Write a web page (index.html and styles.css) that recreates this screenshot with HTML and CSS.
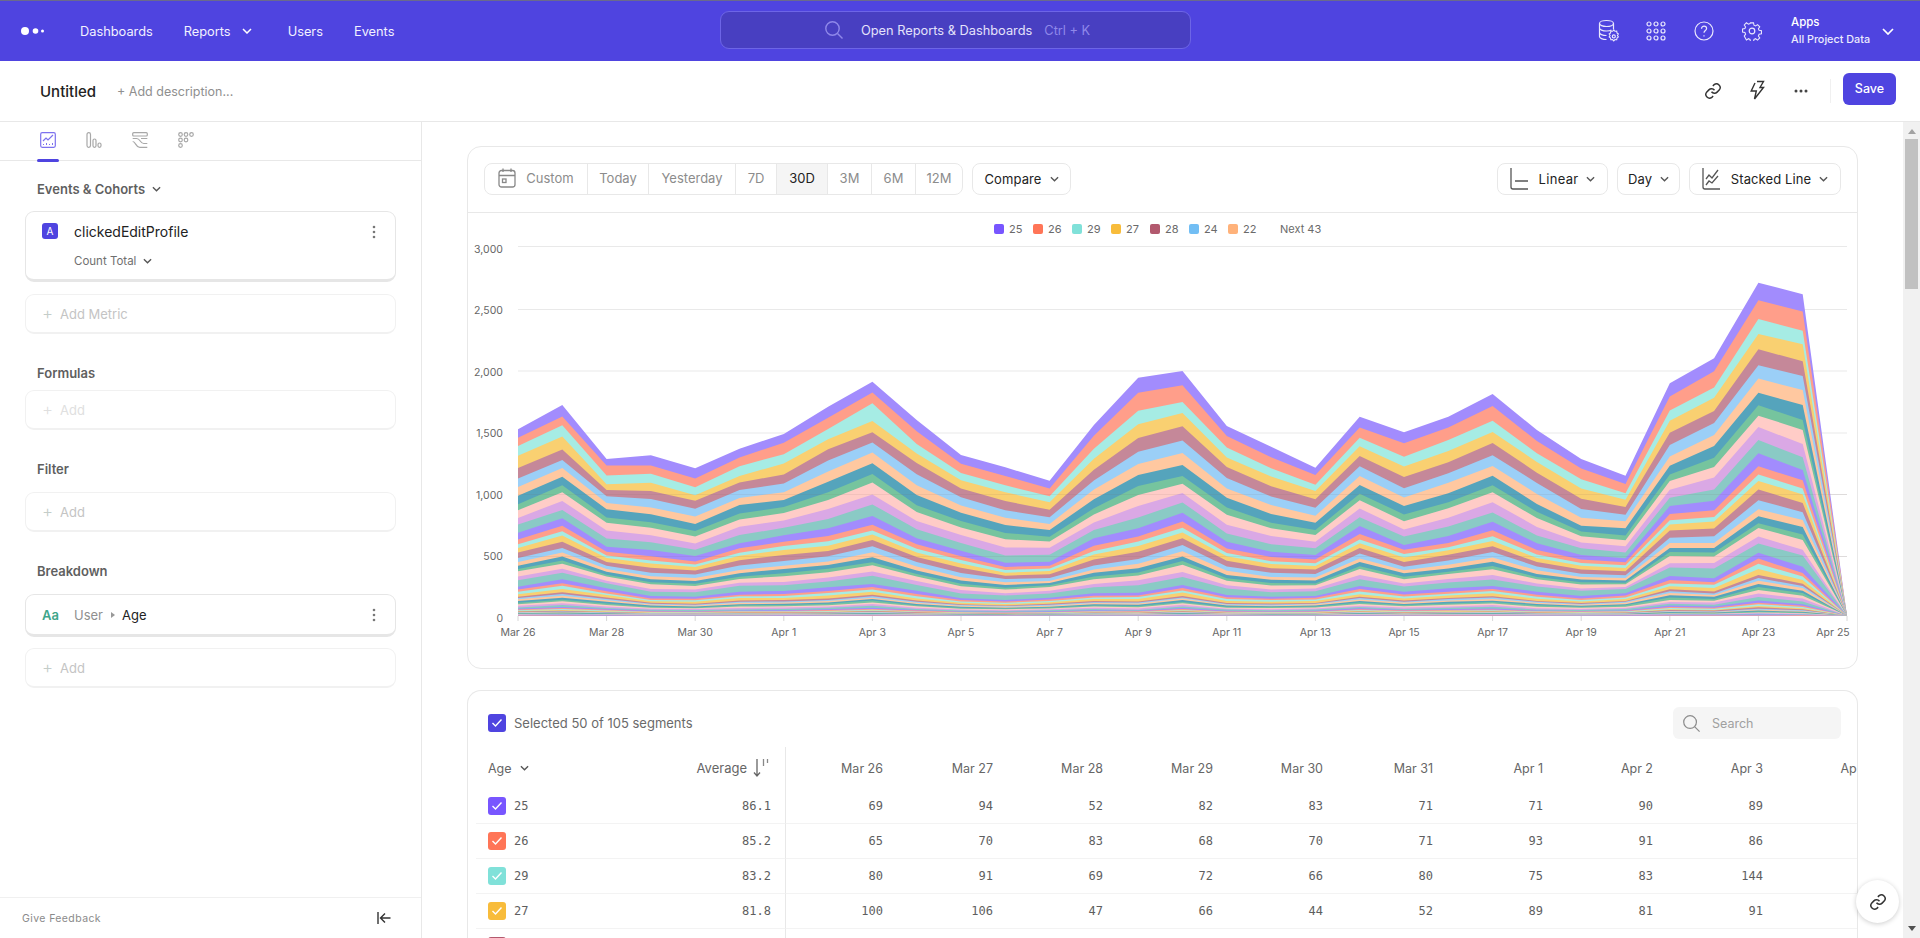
FILE: index.html
```html
<!DOCTYPE html>
<html lang="en">
<head>
<meta charset="utf-8">
<title>Untitled</title>
<link rel="stylesheet" href="styles.css">
</head>
<body>
<header class="topbar">
  <div class="top-left">
    <svg class="logo" width="24" height="10" viewBox="0 0 24 10"><circle cx="4" cy="5" r="4"/><circle cx="14.5" cy="5" r="2.8"/><circle cx="21.5" cy="5" r="1.5"/></svg>
    <nav class="nav">
      <a class="nav-item nav-dash">Dashboards</a>
      <a class="nav-item nav-rep">Reports <svg class="chev" width="10" height="6" viewBox="0 0 10 6"><path d="M1 1l4 4 4-4"/></svg></a>
      <a class="nav-item nav-users">Users</a>
      <a class="nav-item">Events</a>
    </nav>
  </div>
  <div class="omni">
    <svg class="omni-icon" width="20" height="20" viewBox="0 0 20 20"><circle cx="8.5" cy="8.5" r="6.7"/><path d="M13.5 13.5l5 5"/></svg>
    <span class="omni-text">Open Reports &amp; Dashboards</span>
    <span class="omni-key">Ctrl + K</span>
  </div>
  <div class="top-right">
    <svg class="ticon ticon-db" width="22" height="24" viewBox="0 0 22 24"><ellipse cx="8.5" cy="4.5" rx="7" ry="3"/><path d="M1.5 4.5v13c0 1.6 3 3 7 3M1.5 9c0 1.6 3 3 7 3 2 0 4-.4 5-1M15.500 4.500v6M1.500 13.500c0 1.600 3 3 7 3"/><path d="M15.500 12.500l1.300 1.400 1.900-.2.300 1.900 1.500 1.200-1 1.600 1 1.600-1.500 1.200-.3 1.900-1.900-.2-1.300 1.400-1.300-1.400-1.900.2-.3-1.900-1.500-1.200 1-1.600-1-1.600 1.500-1.200.3-1.900 1.900.2z" transform="translate(1.500 -.500) scale(.92)"/><circle cx="15.800" cy="17.400" r="1.500"/></svg>
    <svg class="ticon ticon-grid" width="20" height="20" viewBox="0 0 20 20"><circle cx="3" cy="3" r="2"/><circle cx="10" cy="3" r="2"/><circle cx="17" cy="3" r="2"/><circle cx="3" cy="10" r="2"/><circle cx="10" cy="10" r="2"/><circle cx="17" cy="10" r="2"/><circle cx="3" cy="17" r="2"/><circle cx="10" cy="17" r="2"/><circle cx="17" cy="17" r="2"/></svg>
    <svg class="ticon ticon-help" width="20" height="20" viewBox="0 0 20 20"><circle cx="10" cy="10" r="9"/><path d="M7.500 7.700c0-1.500 1.100-2.500 2.600-2.500s2.500 1 2.500 2.300c0 1.900-2.600 2-2.600 4.200"/><path d="M10 14.200v1.300"/></svg>
    <svg class="ticon ticon-gear" width="20" height="20" viewBox="0 0 20 20"><path d="M8.300 1h3.400l.5 2.600 1.800.8 2.200-1.500 2.400 2.400-1.500 2.200.8 1.800 2.600.5v3.400l-2.600.5-.8 1.800 1.500 2.200-2.400 2.400-2.200-1.500-1.800.8-.5 2.600H8.300l-.5-2.600-1.800-.8-2.200 1.500L1.400 15.700l1.500-2.200-.8-1.800L-.5 11.200V7.800l2.600-.5.8-1.800L1.400 3.300l2.400-2.400L6 2.400l1.800-.8z" transform="translate(1 1) scale(.9)"/><circle cx="10" cy="10" r="2.800"/></svg>
    <div class="apps">
      <div class="apps-t">Apps</div>
      <div class="apps-s">All Project Data</div>
    </div>
    <svg class="chev chev-apps" width="12" height="7" viewBox="0 0 12 7"><path d="M1 1l5 5 5-5"/></svg>
  </div>
</header>

<div class="titlebar">
  <div class="title">Untitled</div>
  <div class="desc">+ Add description...</div>
  <div class="title-actions">
    <svg class="act" width="18" height="18" viewBox="0 0 24 24"><path d="M10 13a5 5 0 0 0 7.500.5l3-3a5 5 0 0 0-7-7l-1.700 1.700"/><path d="M14 11a5 5 0 0 0-7.500-.5l-3 3a5 5 0 0 0 7 7l1.700-1.700"/></svg>
    <svg class="act act-bolt" width="16" height="20" viewBox="0 0 16 20"><path d="M8 1.500h6.500L11 7.500h3.500L5.500 19l1.800-8H2.200L6 3"/></svg>
    <svg class="act-dots" width="14" height="4" viewBox="0 0 14 4"><circle cx="2" cy="2" r="1.500"/><circle cx="7" cy="2" r="1.500"/><circle cx="12" cy="2" r="1.500"/></svg>
    <span class="act-div"></span>
    <button class="save">Save</button>
  </div>
</div>

<div class="work">
  <aside class="side">
    <div class="tabs">
      <span class="tab tab-on">
        <svg width="16" height="16" viewBox="0 0 16 16"><rect x=".7" y=".7" width="14.600" height="14.600" rx="1.500"/><path d="M3 9l3-3 2 2 5-5"/><path class="tk" d="M3.500 13v-1M6.500 13v-2M9.500 13v-1M12.500 13v-2"/></svg>
      </span>
      <span class="tab">
        <svg width="16" height="16" viewBox="0 0 16 16"><rect x="1" y=".7" width="3.500" height="14.600" rx="1.700"/><rect x="7" y="7" width="3" height="8.300" rx="1.500"/><rect x="12" y="11" width="3" height="4.300" rx="1.500"/></svg>
      </span>
      <span class="tab">
        <svg width="16" height="16" viewBox="0 0 16 16"><rect x=".7" y=".7" width="14.600" height="3.300" rx="1"/><path d="M.7 6.500h4c3.500 0 3.500 5 7 5h3.600M.7 9.500c3 0 3 5.800 7 5.800h7.600M9 6.500h6.300"/></svg>
      </span>
      <span class="tab">
        <svg width="16" height="16" viewBox="0 0 16 16"><circle cx="2.500" cy="2.500" r="1.800"/><circle cx="8" cy="2.500" r="1.800"/><circle cx="13.500" cy="2.500" r="1.800"/><circle cx="2.500" cy="8" r="1.800"/><circle cx="8" cy="8" r="1.800"/><circle cx="2.500" cy="13.500" r="1.800"/></svg>
      </span>
    </div>
    <div class="panel">
      <div class="sec sec-first">Events &amp; Cohorts <svg class="chev chev-dark" width="9" height="6" viewBox="0 0 10 6"><path d="M1 1l4 4 4-4"/></svg></div>
      <div class="card-ev">
        <div class="ev-row">
          <span class="badge">A</span>
          <span class="ev-name">clickedEditProfile</span>
          <svg class="kebab" width="4" height="14" viewBox="0 0 4 14"><circle cx="2" cy="2" r="1.300"/><circle cx="2" cy="7" r="1.300"/><circle cx="2" cy="12" r="1.300"/></svg>
        </div>
        <div class="ev-sub">Count Total <svg class="chev chev-dark" width="9" height="6" viewBox="0 0 10 6"><path d="M1 1l4 4 4-4"/></svg></div>
      </div>
      <div class="add add-metric"><span class="plus">+</span>Add Metric</div>
      <div class="sec">Formulas</div>
      <div class="add add-tight add-faint"><span class="plus">+</span>Add</div>
      <div class="sec">Filter</div>
      <div class="add"><span class="plus">+</span>Add</div>
      <div class="sec">Breakdown</div>
      <div class="card-br">
        <span class="aa">Aa</span>
        <span class="br-user">User</span>
        <span class="br-arrow"></span>
        <span class="br-age">Age</span>
        <svg class="kebab" width="4" height="14" viewBox="0 0 4 14"><circle cx="2" cy="2" r="1.300"/><circle cx="2" cy="7" r="1.300"/><circle cx="2" cy="12" r="1.300"/></svg>
      </div>
      <div class="add add-last"><span class="plus">+</span>Add</div>
    </div>
    <div class="side-foot">
      <span class="feedback">Give Feedback</span>
      <svg class="collapse" width="14" height="12" viewBox="0 0 14 12"><path d="M1 0v12M13.500 6H4M8 1.500L3.500 6 8 10.500"/></svg>
    </div>
  </aside>

  <main class="main">
    <section class="chart-card">
      <div class="toolbar">
        <div class="seg">
          <span class="seg-i seg-custom">
            <svg width="18" height="20" viewBox="0 0 18 20"><rect x="1" y="2.500" width="16" height="16.500" rx="2.500"/><path d="M1 7.500h16M5 .5v3.500M13 .5v3.500"/><rect x="4.500" y="11" width="3.500" height="3.500"/></svg>
            Custom
          </span>
          <span class="seg-i seg-today">Today</span>
          <span class="seg-i seg-yest">Yesterday</span>
          <span class="seg-i seg-7d">7D</span>
          <span class="seg-i seg-30d">30D</span>
          <span class="seg-i seg-3m">3M</span>
          <span class="seg-i seg-6m">6M</span>
          <span class="seg-i seg-12m">12M</span>
        </div>
        <button class="drop drop-compare">Compare <svg class="chev chev-dark" width="9" height="6" viewBox="0 0 10 6"><path d="M1 1l4 4 4-4"/></svg></button>
        <div class="tool-right">
          <button class="drop drop-linear">
            <svg class="ico-ax" width="18" height="22" viewBox="0 0 18 22"><path d="M1 0v19c0 1.500.5 2 2 2h15M5 13h13"/></svg>
            Linear <svg class="chev chev-dark" width="9" height="6" viewBox="0 0 10 6"><path d="M1 1l4 4 4-4"/></svg>
          </button>
          <button class="drop drop-day">Day <svg class="chev chev-dark" width="9" height="6" viewBox="0 0 10 6"><path d="M1 1l4 4 4-4"/></svg></button>
          <button class="drop drop-stack">
            <svg class="ico-ax" width="18" height="22" viewBox="0 0 18 22"><path d="M1 0v19c0 1.500.5 2 2 2h15"/><path d="M4 11l3-4 3 3 6-8M4 17l3-4 3 2 6-7"/></svg>
            Stacked Line <svg class="chev chev-dark" width="9" height="6" viewBox="0 0 10 6"><path d="M1 1l4 4 4-4"/></svg>
          </button>
        </div>
      </div>
      <div class="legend">
        <span class="lg"><i class="sw c25"></i>25</span>
        <span class="lg"><i class="sw c26"></i>26</span>
        <span class="lg"><i class="sw c29"></i>29</span>
        <span class="lg"><i class="sw c27"></i>27</span>
        <span class="lg"><i class="sw c28"></i>28</span>
        <span class="lg"><i class="sw c24"></i>24</span>
        <span class="lg"><i class="sw c22"></i>22</span>
        <span class="lg lg-next">Next 43</span>
      </div>
      <svg id="chart" class="chart" width="1389" height="430" viewBox="468 238 1389 430"></svg>
    </section>

    <section class="table-card">
      <div class="table-top">
        <span class="check c-main"><svg width="12" height="10" viewBox="0 0 12 10"><path d="M1.500 5l3 3 6-6.500"/></svg></span>
        <span class="sel-text">Selected 50 of 105 segments</span>
        <div class="tsearch">
          <svg width="19" height="19" viewBox="0 0 20 20"><circle cx="8.500" cy="8.500" r="6.700"/><path d="M13.500 13.500l5 5"/></svg>
          <span>Search</span>
        </div>
      </div>
      <div class="grid grid-head">
        <div class="g-name g-age">Age <svg class="chev chev-dark" width="9" height="6" viewBox="0 0 10 6"><path d="M1 1l4 4 4-4"/></svg></div>
        <div class="g-avg">Average
          <svg class="sort" width="16" height="20" viewBox="0 0 16 20"><path d="M4 1v17M1 14.500L4 18l3-3.500"/><path class="sort-b" d="M10.500 1v7M14.500 1v4"/></svg>
        </div>
        <div>Mar 26</div><div>Mar 27</div><div>Mar 28</div><div>Mar 29</div><div>Mar 30</div><div>Mar 31</div><div>Apr 1</div><div>Apr 2</div><div>Apr 3</div><div>Apr 4</div>
      </div>
      <div class="grid grid-row">
        <div class="g-name"><span class="check c25"><svg width="12" height="10" viewBox="0 0 12 10"><path d="M1.500 5l3 3 6-6.500"/></svg></span>25</div>
        <div class="g-avg">86.1</div>
        <div>69</div><div>94</div><div>52</div><div>82</div><div>83</div><div>71</div><div>71</div><div>90</div><div>89</div><div></div>
      </div>
      <div class="grid grid-row">
        <div class="g-name"><span class="check c26"><svg width="12" height="10" viewBox="0 0 12 10"><path d="M1.500 5l3 3 6-6.500"/></svg></span>26</div>
        <div class="g-avg">85.2</div>
        <div>65</div><div>70</div><div>83</div><div>68</div><div>70</div><div>71</div><div>93</div><div>91</div><div>86</div><div></div>
      </div>
      <div class="grid grid-row">
        <div class="g-name"><span class="check c29"><svg width="12" height="10" viewBox="0 0 12 10"><path d="M1.500 5l3 3 6-6.500"/></svg></span>29</div>
        <div class="g-avg">83.2</div>
        <div>80</div><div>91</div><div>69</div><div>72</div><div>66</div><div>80</div><div>75</div><div>83</div><div>144</div><div></div>
      </div>
      <div class="grid grid-row">
        <div class="g-name"><span class="check c27"><svg width="12" height="10" viewBox="0 0 12 10"><path d="M1.500 5l3 3 6-6.500"/></svg></span>27</div>
        <div class="g-avg">81.8</div>
        <div>100</div><div>106</div><div>47</div><div>66</div><div>44</div><div>52</div><div>89</div><div>81</div><div>91</div><div></div>
      </div>
      <div class="grid grid-row">
        <div class="g-name"><span class="check c28"><svg width="12" height="10" viewBox="0 0 12 10"><path d="M1.500 5l3 3 6-6.500"/></svg></span></div>
        <div class="g-avg"></div>
        <div></div><div></div><div></div><div></div><div></div><div></div><div></div><div></div><div></div><div></div>
      </div>
    </section>
  </main>

  <div class="scrollbar">
    <span class="sb-up"></span>
    <span class="sb-thumb"></span>
    <span class="sb-down"></span>
  </div>
</div>

<button class="float-link" aria-label="Copy link">
  <svg width="18" height="18" viewBox="0 0 24 24"><path d="M10 13a5 5 0 0 0 7.500.5l3-3a5 5 0 0 0-7-7l-1.700 1.700"/><path d="M14 11a5 5 0 0 0-7.500-.5l-3 3a5 5 0 0 0 7 7l1.700-1.700"/></svg>
</button>
<script src="chart.js"></script>
</body>
</html>
```

FILE: styles.css
```css
* { box-sizing: border-box; }
html, body { margin: 0; padding: 0; height: 938px; overflow: hidden; }
body { font-family: Inter, "Liberation Sans", sans-serif; font-size: 13px; color: #333; background: #fff; display: flex; flex-direction: column; }
button { font-family: inherit; }
svg { display: block; flex: none; }

.chev { fill: none; stroke: #fff; stroke-width: 1.5; display: inline-block; }
.chev-dark { stroke: #555; }

/* top bar */
.topbar { height: 61px; flex: none; background: #4f44e0; border-top: 1px solid #6a6a8c; display: flex; align-items: center; color: #fff; }
.top-left { width: 720px; flex: none; display: flex; align-items: center; padding-left: 21px; }
.logo { fill: #fff; margin-right: 35px; }
.nav { display: flex; align-items: center; font-size: 12.800px; font-weight: 400; }
.nav-item { color: #f2f1ff; display: flex; align-items: center; white-space: nowrap; }
.nav-item .chev { margin-left: 11px; }
.nav-dash { margin-right: 31px; }
.nav-rep { margin-right: 36px; }
.nav-users { margin-right: 31px; }
.omni { width: 471px; height: 38px; flex: none; background: #483fc1; border: 1px solid #6d65e6; border-radius: 9px; display: flex; align-items: center; padding-left: 103px; margin-top: -2px; font-size: 12.800px; }
.omni-icon { fill: none; stroke: #8f88ea; stroke-width: 1.4; margin-right: 17px; }
.omni-text { color: #e4e2fb; margin-right: 12px; white-space: nowrap; }
.omni-key { color: #8f88ea; white-space: nowrap; }
.top-right { flex: 1; display: flex; align-items: center; padding-left: 407px; }
.ticon { fill: none; stroke: #e9e7fd; stroke-width: 1.2; }
.ticon-db { margin-right: 26px; }
.ticon-grid { margin-right: 28px; }
.ticon-help { margin-right: 28px; }
.ticon-gear { margin-right: 29px; }
.apps { width: 91px; font-size: 11.500px; line-height: 17px; font-weight: 500; flex: none; }
.apps-s { font-size: 10.800px; font-weight: 500; color: #ecebfd; }
.chev-apps { stroke-width: 1.7; }

/* title row */
.titlebar { height: 61px; flex: none; border-bottom: 1px solid #e8e8e8; display: flex; align-items: center; padding: 0 24px 0 40px; }
.title { font-size: 15px; font-weight: 500; color: #222; margin-right: 21px; }
.desc { color: #8f8f8f; font-size: 12.500px; }
.title-actions { margin-left: auto; display: flex; align-items: center; }
.act { fill: none; stroke: #333; stroke-width: 1.900; }
.act-bolt { stroke-width: 1.400; margin-left: 27px; margin-top: -3px; }
.act-dots { fill: #444; margin-left: 29px; }
.act-div { width: 1px; height: 24px; background: #f0f0f0; margin: 0 12px 0 22px; }
.save { width: 53px; height: 32px; background: #4f44e0; color: #fff; border: 0; border-radius: 6px; font-size: 12.500px; font-weight: 500; padding: 0 0 2px; margin-top: -4px; }

/* workspace */
.work { flex: 1; min-height: 0; display: flex; }

.side { width: 422px; flex: none; border-right: 1px solid #e8e8e8; display: flex; flex-direction: column; }
.tabs { height: 39px; flex: none; border-bottom: 1px solid #e8e8e8; display: flex; padding-left: 37px; gap: 24px; }
.tab { width: 22px; height: 39px; padding: 10px 3px 0; position: relative; }
.tab svg { fill: none; stroke: #a8a8a8; stroke-width: 1.200; }
.tab-on svg { stroke: #7d72ee; }
.tab-on .tk { stroke-width: 1; }
.tab-on::after { content: ""; position: absolute; left: 0; right: 0; bottom: -1px; height: 3px; background: #4f44e0; border-radius: 2px; }

.panel { flex: 1; padding: 0 25px; }
.sec { height: 20px; line-height: 20px; margin: 29px 0 7px 12px; font-size: 13px; font-weight: 600; color: #5f5f5f; display: flex; align-items: center; }
.sec .chev { margin-left: 7px; }
.sec-first { margin-top: 18px; margin-bottom: 12px; }
.card-ev { height: 71px; border: 1px solid #e6e6e6; border-bottom-width: 3px; border-radius: 9px; padding: 8px 16px 0; }
.ev-row { display: flex; align-items: center; height: 22px; }
.badge { width: 16px; height: 16px; border-radius: 3px; background: #4f44e0; color: #fff; font-size: 10px; display: flex; align-items: center; justify-content: center; margin-right: 16px; }
.ev-name { font-size: 14px; color: #222; }
.kebab { fill: #777; margin-left: auto; margin-right: 3px; }
.ev-row .kebab { margin-top: 1px; }
.ev-sub { margin: 12px 0 0 32px; font-size: 11.500px; color: #6f6f6f; display: flex; align-items: center; gap: 7px; }
.add { height: 40px; margin-bottom: 0; border: 1px solid #f1f1f1; border-bottom-width: 2px; border-radius: 9px; display: flex; align-items: center; padding-left: 16px; font-size: 13px; color: #c4c4c4; }
.add-metric { margin-top: 12px; }
.add-faint { color: #e0e0e0; }
.plus { width: 18px; font-size: 17px; line-height: 1; font-weight: 300; color: #c4cdc9; }
.add-faint .plus { color: #dfdfdf; }
.sec + .add:not(.add-tight), .sec + .card-br { margin-top: 13px; }
.card-br { height: 43px; border: 1px solid #e6e6e6; border-bottom-width: 3px; border-radius: 9px; padding: 0 16px; display: flex; align-items: center; font-size: 13px; }
.aa { width: 32px; color: #3fa68a; font-weight: 600; }
.br-user { color: #8f8f8f; }
.br-arrow { width: 0; height: 0; border-left: 4px solid #999; border-top: 3px solid transparent; border-bottom: 3px solid transparent; margin: 0 7px 0 8px; }
.br-age { color: #222; }
.add-last { margin-top: 11px; }
.side-foot { height: 41px; flex: none; border-top: 1px solid #f0f0f0; display: flex; align-items: center; padding: 0 30px 0 22px; }
.feedback { font-size: 10.500px; letter-spacing: .4px; color: #8a8a8a; }
.collapse { margin-left: auto; fill: none; stroke: #333; stroke-width: 1.400; }

.main { flex: 1; min-width: 0; padding: 24px 45px 0; overflow: hidden; }
.chart-card { height: 523px; border: 1px solid #e8e8e8; border-radius: 14px; overflow: hidden; }
.toolbar { height: 66px; border-bottom: 1px solid #e8e8e8; display: flex; align-items: center; padding: 0 16px 2px 16px; }
.seg { height: 32px; display: flex; border: 1px solid #e8e8e8; border-radius: 8px; overflow: hidden; color: #8c8c8c; flex: none; }
.seg-i { display: flex; align-items: center; justify-content: center; border-right: 1px solid #e8e8e8; white-space: nowrap; flex: none; padding-bottom: 1px; }
.seg-i:last-child { border-right: 0; }
.seg-custom { width: 103px; gap: 10px; }
.seg-custom svg { fill: none; stroke: #888; stroke-width: 1.300; }
.seg-today { width: 61px; }
.seg-yest { width: 87px; }
.seg-7d { width: 41px; }
.seg-30d { width: 51px; background: #f5f5f5; color: #222; }
.seg-3m { width: 44px; }
.seg-6m { width: 44px; }
.seg-12m { width: 46px; }
.drop { height: 32px; background: #fff; border: 1px solid #e8e8e8; border-radius: 8px; display: flex; align-items: center; justify-content: center; gap: 8px; font-size: 13px; color: #222; padding: 0; white-space: nowrap; letter-spacing: .1px; }
.drop-compare { width: 99px; margin-left: 9px; }
.tool-right { margin-left: auto; display: flex; gap: 9px; }
.drop-linear { width: 111px; gap: 8px; letter-spacing: .3px; }
.drop-day { width: 63px; }
.drop-stack { width: 152px; gap: 8px; }
.ico-ax { fill: none; stroke: #555; stroke-width: 1.300; margin-right: 3px; }
.legend { height: 25px; display: flex; align-items: center; padding: 6px 0 0 526px; font-size: 11px; color: #6a6a6a; }
.lg { display: flex; align-items: center; width: 39px; flex: none; }
.lg-next { margin-left: 13px; width: auto; }
.sw { width: 10px; height: 10px; border-radius: 2px; margin-right: 5px; }
.c25 { background: #7856ff; }
.c26 { background: #ff7557; }
.c29 { background: #80e1d9; }
.c27 { background: #f8bc3b; }
.c28 { background: #b2596e; }
.c24 { background: #72bef4; }
.c22 { background: #ffb27a; }
.chart { font-family: Inter, "Liberation Sans", sans-serif; font-size: 10.500px; }
.gl { stroke: #e9e9e9; stroke-width: 1; }
.gl-over { stroke: rgba(130, 100, 100, .1); stroke-width: 1; }
.ytxt { fill: #666; text-anchor: end; }
.xtxt { fill: #666; text-anchor: middle; }
.tick { stroke: #d8d8d8; stroke-width: 1; }

.table-card { margin-top: 21px; height: 300px; border: 1px solid #e8e8e8; border-bottom: 0; border-radius: 14px 14px 0 0; overflow: hidden; color: #555; }
.table-top { height: 56px; display: flex; align-items: flex-start; padding: 16px 16px 0 20px; }
.check { width: 18px; height: 18px; border-radius: 3px; display: flex; align-items: center; justify-content: center; flex: none; }
.check svg { fill: none; stroke: #fff; stroke-width: 1.400; }
.c-main { background: #4f44e0; margin-top: 7px; }
.sel-text { margin: 7px 0 0 8px; line-height: 18px; color: #6a6a6a; white-space: nowrap; }
.tsearch { margin-left: auto; width: 168px; height: 32px; background: #f5f5f5; border-radius: 6px; display: flex; align-items: center; padding-left: 9px; gap: 11px; color: #a0a0a0; font-size: 12.500px; }
.tsearch svg { fill: none; stroke: #8c8c8c; stroke-width: 1.300; }
.grid { display: grid; grid-template-columns: 204px 106px 97px repeat(9, 110px) 110px; width: 1500px; margin-left: 8px; align-items: stretch; text-align: right; }
.grid > div { display: flex; align-items: center; justify-content: flex-end; white-space: nowrap; }
.grid-head { height: 42px; font-size: 12.500px; color: #666; }
.grid-row { height: 35px; font-family: "DejaVu Sans Mono", "Liberation Mono", monospace; font-size: 12px; color: #5e5e5e; }
.grid-row > div { border-bottom: 1px solid #f3f3f3; }
.grid .g-name { justify-content: flex-start; padding-left: 12px; gap: 8px; }
.g-age { gap: 11px; font-family: Inter, sans-serif; }
.grid .g-avg { border-right: 1px solid #e8e8e8; padding-right: 14px; gap: 8px; }
.grid-head .g-avg { font-size: 13px; gap: 6px; padding-right: 16px; }
.sort { fill: none; stroke: #666; stroke-width: 1.300; }
.sort-b { stroke: #888; }

.scrollbar { width: 17px; flex: none; background: #f1f1f1; display: flex; flex-direction: column; align-items: center; }
.sb-up { width: 0; height: 0; margin-top: 7px; border-left: 4px solid transparent; border-right: 4px solid transparent; border-bottom: 5px solid #a3a3a3; }
.sb-thumb { width: 13px; height: 150px; margin-top: 5px; background: #c1c1c1; }
.sb-down { width: 0; height: 0; margin-top: auto; margin-bottom: 7px; border-left: 4px solid transparent; border-right: 4px solid transparent; border-top: 5px solid #505050; }

.float-link { position: absolute; left: 1856px; top: 880px; width: 43px; height: 43px; border: 0; border-radius: 50%; background: #fff; box-shadow: 0 1px 5px rgba(0, 0, 0, .2); display: flex; align-items: center; justify-content: center; padding: 0; }
.float-link svg { fill: none; stroke: #333; stroke-width: 2; }
```

FILE: chart.js
```js
(function () {
  var NS = 'http://www.w3.org/2000/svg';
  var svg = document.getElementById('chart');
  var X0 = 518, STEP = 44.3, BASE = 1157;

  // Readings of the stack, on a scale of 3 per pixel above y=230.
  var TOP = [598,525,687,676,715,656,612,530,455,570,675,712,752,585,443,423,588,650,713,560,607,560,492,600,687,737,460,385,158,193,1157];
  var A =   [797,740,838,853,882,825,810,755,700,795,848,885,900,808,735,705,803,852,878,765,828,790,737,822,887,895,707,648,488,525,1157];
  var B =   [908,865,950,960,978,940,916,895,858,925,962,998,995,925,895,848,935,965,975,888,945,918,875,940,975,985,828,812,670,720,1157];
  var C =   [1070,1048,1075,1098,1100,1085,1083,1072,1062,1082,1105,1110,1103,1090,1088,1065,1095,1100,1098,1068,1085,1075,1068,1085,1098,1090,1038,1045,968,1010,1157];

  var W0 = [50,55,42,48,49,45,41];
  var W1 = [40,29,38,37,38];
  var W2 = [36,26,20,26,30,25,20,20,15,27,20,33];
  var W3 = [22,15,15,18,9,8,10,10,10,10,10,10,6,5,5,4,4,3,3,3,3,2,2,2,2,2];

  // Known values of the first four segments for the first nine days (table).
  var KNOWN = [
    [69,94,52,82,83,71,71,90,89],
    [65,70,83,68,70,71,93,91,86],
    [80,91,69,72,66,80,75,83,144],
    [100,106,47,66,44,52,89,81,91]
  ];

  var COLORS = ['#a28cfd','#ff9e8a','#a6ece4','#f9d071','#c58899','#9bcff7','#ffc8a0','#55a4bc','#76c49e','#ffccc7','#daa8e5','#8acac5'];

  var seed = 12345;
  function rnd() { seed = (seed * 1103515245 + 12345) & 0x7fffffff; return seed / 0x7fffffff; }

  function split(from, to, w, spread) {
    var v = w.map(function (x) { return x * (1 + spread * (rnd() - 0.5)); });
    var sum = v.reduce(function (a, b) { return a + b; }, 0);
    var out = [], y = from;
    v.forEach(function (x) { y += (to - from) * x / sum; out.push(y); });
    return out;
  }

  // lines[day][n] is the upper edge of layer n.
  var days = TOP.length, lines = [];
  for (var d = 0; d < days; d++) {
    var col = [TOP[d]];
    if (d < 9) {
      var y = TOP[d];
      for (var k = 0; k < 4; k++) { y += KNOWN[k][d] * 0.37; col.push(y); }
      col = col.concat(split(y, A[d], W0.slice(4), 0.3));
    } else {
      col = col.concat(split(TOP[d], A[d], W0, 0.22));
    }
    col = col.concat(split(A[d], B[d], W1, 0.22));
    col = col.concat(split(B[d], C[d], W2, 0.3));
    col = col.concat(split(C[d], BASE, W3, 0.4));
    lines.push(col);
  }

  function px(i) { return X0 + i * STEP; }
  function py(z) { return 230 + z / 3; }
  function el(name, attrs, text) {
    var e = document.createElementNS(NS, name);
    for (var k in attrs) e.setAttribute(k, attrs[k]);
    if (text) e.textContent = text;
    svg.appendChild(e);
    return e;
  }

  var ticks = [[3000,246,249],[2500,309,310],[2000,370.5,372],[1500,432.5,433],[1000,494,495],[500,556,556],[0,616,618]];
  ticks.forEach(function (t) {
    if (t[0]) el('line', { x1: X0, x2: 1847, y1: t[1] + 0.5, y2: t[1] + 0.5, 'class': 'gl' });
    var label = t[0] >= 1000 ? String(t[0]).replace(/(\d)(\d{3})$/, '$1,$2') : String(t[0]);
    el('text', { x: 503, y: t[2] + 4, 'class': 'ytxt' }, label);
  });

  // Painted top-down: each layer is filled to the baseline and the next one
  // covers its lower part, so no seams show between the bands.
  var n = lines[0].length - 1;
  for (var l = 0; l < n; l++) {
    var pts = [];
    for (var i = 0; i < days; i++) pts.push(px(i).toFixed(1) + ',' + py(lines[i][l]).toFixed(1));
    pts.push(px(days - 1) + ',' + py(BASE), X0 + ',' + py(BASE));
    el('polygon', { points: pts.join(' '), fill: COLORS[l % 12] });
  }

  [494, 556].forEach(function (y) {
    el('line', { x1: X0, x2: 1847, y1: y + 0.5, y2: y + 0.5, 'class': 'gl-over' });
  });

  var names = ['Mar 26','Mar 28','Mar 30','Apr 1','Apr 3','Apr 5','Apr 7','Apr 9','Apr 11','Apr 13','Apr 15','Apr 17','Apr 19','Apr 21','Apr 23','Apr 25'];
  names.forEach(function (name, idx) {
    var x = X0 + idx * 2 * STEP;
    el('line', { x1: x, x2: x, y1: 616, y2: 621, 'class': 'tick' });
    var tx = idx === names.length - 1 ? x - 14 : x;
    el('text', { x: tx, y: 636, 'class': 'xtxt' }, name);
  });
})();
```
